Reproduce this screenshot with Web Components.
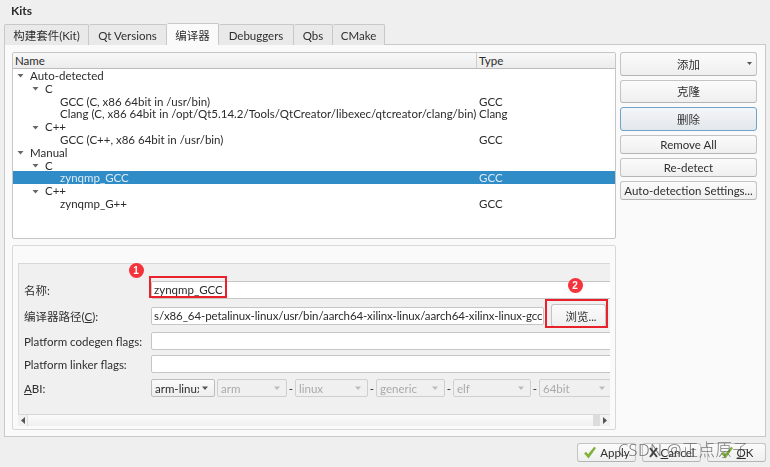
<!DOCTYPE html>
<html>
<head>
<meta charset="utf-8">
<style>
  html, body { margin: 0; height: 100%; }
  body { background: #efefef; overflow: hidden; }
</style>
</head>
<body>
<kits-dialog></kits-dialog>
<script>
const ui = `Lato, "Noto Sans CJK SC", sans-serif`;
const tick = `<svg width="14" height="13" viewBox="0 0 14 13"><path d="M1 7.500L3.200 5.800 5 8.200 11.200.8 13 2 5.600 12.500z" fill="#82b23c"/></svg>`;

class QtButton extends HTMLElement {
  connectedCallback() {
    const root = this.attachShadow({ mode: "open" });
    root.innerHTML = `
      <style>
        :host { display: flex; align-items: center; justify-content: center; box-sizing: border-box; position: relative;
          height: 23px; border: 1px solid #c4c4c4; border-bottom-color: #b4b4b4; border-radius: 3px;
          background: linear-gradient(#fbfbfb, #efefef); color: #2f2f2f; font: 11.5px ${ui}; white-space: nowrap; }
        :host([focused]) { border-color: #6fa3c9; background: linear-gradient(#f4f6f8, #e2e7ec); }
      </style><slot></slot>`;
  }
}
customElements.define("qt-button", QtButton);

class TreeRow extends HTMLElement {
  connectedCallback() {
    const depth = +this.getAttribute("depth") || 0;
    const arrow = this.hasAttribute("open");
    const root = this.attachShadow({ mode: "open" });
    root.innerHTML = `
      <style>
        :host { display: grid; grid-template-columns: 463px 1fr; height: 12.8px; line-height: 12.8px; font-size: 11.5px; color: #2b2b2b; white-space: nowrap; }
        :host([selected]) { background: #308cc6; color: #dcebf5; }
        .name { display: flex; align-items: center; padding: 1px 0 0 ${2 + depth * 15}px; }
        svg { width: 9px; height: 6px; margin: 0 5px 0 1px; flex: none; }
        .type { padding: 1px 0 0 3px; }
      </style>
      <div class="name">${arrow ? '<svg viewBox="0 0 9 6"><path d="M1.500 1h6L4.500 4.500z" fill="#666"/></svg>' : ''}<span><slot></slot></span></div>
      <div class="type">${this.getAttribute("type") || ""}</div>`;
  }
}
customElements.define("tree-row", TreeRow);

class QtField extends HTMLElement {
  connectedCallback() {
    const root = this.attachShadow({ mode: "open" });
    root.innerHTML = `
      <style>
        :host { display: block; box-sizing: border-box; height: 18px; line-height: 16px; background: #fff; border: 1px solid #c6c6c6; border-radius: 2px;
          padding: 0 2px; font-size: 11.5px; color: #2b2b2b; white-space: nowrap; overflow: hidden; flex: 1; min-width: 0; }
      </style><slot></slot>`;
  }
}
customElements.define("qt-field", QtField);

class QtCombo extends HTMLElement {
  connectedCallback() {
    const root = this.attachShadow({ mode: "open" });
    const w = this.getAttribute("w") || 66;
    root.innerHTML = `
      <style>
        :host { display: flex; align-items: center; box-sizing: border-box; width: ${w}px; height: 18px; flex: none; padding: 0 3px;
          border: 1px solid #cfcfcf; border-radius: 2px; background: #f0f0f0; color: #aaa; font-size: 11.5px; overflow: hidden; }
        :host([active]) { background: linear-gradient(#fafafa, #eeeeee); border-color: #bdbdbd; color: #2b2b2b; }
        span { flex: 1; overflow: hidden; white-space: nowrap; }
        svg { width: 8px; height: 5px; flex: none; margin: 0 2px 0 2px; }
      </style>
      <span><slot></slot></span>
      <svg viewBox="0 0 8 5"><path d="M1 .5h6L4 4z" fill="${this.hasAttribute("active") ? "#555" : "#bbb"}"/></svg>`;
  }
}
customElements.define("qt-combo", QtCombo);

class RedBadge extends HTMLElement {
  connectedCallback() {
    const root = this.attachShadow({ mode: "open" });
    root.innerHTML = `
      <style>
        :host { position: absolute; width: 15px; height: 15px; border-radius: 50%; background: #f5333a; color: #fff;
          font: bold 10px/15px "Liberation Sans", sans-serif; text-align: center; }
      </style><slot></slot>`;
  }
}
customElements.define("red-badge", RedBadge);

class KitsDialog extends HTMLElement {
  connectedCallback() {
    const root = this.attachShadow({ mode: "open" });
    root.innerHTML = `
      <style>
        :host { display: block; width: 770px; height: 467px; position: relative; overflow: hidden; font: 11.5px ${ui}; color: #2f2f2f; filter: blur(.3px); }
        .title { height: 24px; padding: 3px 0 0 11px; box-sizing: border-box; font-weight: 700; font-size: 12px; line-height: 15px; color: #2b2b2b; }
        .tabs { display: flex; height: 20px; padding-left: 4px; position: relative; z-index: 1; }
        .tab { box-sizing: border-box; height: 21px; padding-top: 3px; text-align: center; background: #e9e9e9; border: 1px solid #c8c8c8; border-bottom: 0; border-left: 0; border-radius: 2px 2px 0 0; line-height: 16px; color: #2f2f2f; }
        .tab:first-child { border-left: 1px solid #c8c8c8; }
        .tab.on { background: #fafafa; height: 22px; margin-top: -1px; padding-top: 4px; }
        .panel { box-sizing: border-box; margin: 0 4px; height: 393px; background: #fafafa; border: 1px solid #c8c8c8; padding: 7px 8px 0 7px; display: grid; grid-template-columns: 604px 137px; column-gap: 4px; grid-template-rows: 187px 1fr; row-gap: 6px; }
        .tree { background: #fff; border: 1px solid #c6c6c6; border-radius: 2px; overflow: hidden; }
        .head { display: grid; grid-template-columns: 463px 1fr; height: 15px; line-height: 15px; background: linear-gradient(#f8f8f8, #ececec); border-bottom: 1px solid #bcbcbc; color: #2b2b2b; }
        .head div { padding-left: 2px; }
        .head div + div { border-left: 1px solid #cfcfcf; }
        .side { display: flex; flex-direction: column; gap: 4px; }
        .side qt-button.tall { height: 23.6px; }
        .side qt-button.small { height: 19px; }
        .more { position: absolute; right: 4px; top: 9px; width: 5px; height: 3px; }
        .details { grid-column: 1; background: #fafafa; border: 1px solid #d8d8d8; border-radius: 2px; height: 185px; padding: 17px 5px 0 5px; box-sizing: border-box; }
        .form { background: #f0f0f0; border: 1px solid #d8d8d8; border-right: 0; height: 152px; box-sizing: border-box; padding: 17px 0 0 5px; display: flex; flex-direction: column; gap: 5px; overflow: hidden; }
        .row { display: flex; align-items: center; height: 18px; margin-right: -4px; }
        .row.tall { height: 23px; }
        .lbl { width: 127px; flex: none; white-space: nowrap; }
        .scroll { height: 11px; display: flex; background: linear-gradient(#fbfbfb, #f0f0f0); font-size: 0; }
        .cap { width: 10px; flex: none; display: flex; align-items: center; justify-content: center; border-right: 1px solid #ddd; background: #f1f1f1; box-sizing: border-box; }
        .cap.end { border-right: 0; }
        .bar { flex: 1; }
        .slot { width: 7px; background: #dcdcdc; }
        .abi { margin-top: 1px; }
        .dash { flex: none; width: 8px; text-align: center; }
        .foot { position: absolute; top: 443px; left: 577px; display: flex; gap: 6px; }
        .foot qt-button { height: 19px; width: 59px; gap: 3px; }
        .mark { position: absolute; border: 2px solid #e8212b; box-sizing: border-box; }
        .wm { position: absolute; left: 618px; top: 440px; font-size: 16.500px; line-height: 20px; letter-spacing: .3px; font-weight: 300; color: rgba(70,70,70,.7); white-space: nowrap; font-family: "Noto Sans", "Noto Sans CJK SC", sans-serif; }
      </style>
      <div class="title">Kits</div>
      <div class="tabs">
        <div class="tab" style="width:85px">构建套件(Kit)</div>
        <div class="tab" style="width:78px">Qt Versions</div>
        <div class="tab on" style="width:52px">编译器</div>
        <div class="tab" style="width:75px">Debuggers</div>
        <div class="tab" style="width:39px">Qbs</div>
        <div class="tab" style="width:52px">CMake</div>
      </div>
      <div class="panel">
        <div class="tree">
          <div class="head"><div>Name</div><div>Type</div></div>
          <div>
            <tree-row depth="0" open>Auto-detected</tree-row>
            <tree-row depth="1" open>C</tree-row>
            <tree-row depth="3" type="GCC">GCC (C, x86 64bit in /usr/bin)</tree-row>
            <tree-row depth="3" type="Clang">Clang (C, x86 64bit in /opt/Qt5.14.2/Tools/QtCreator/libexec/qtcreator/clang/bin)</tree-row>
            <tree-row depth="1" open>C++</tree-row>
            <tree-row depth="3" type="GCC">GCC (C++, x86 64bit in /usr/bin)</tree-row>
            <tree-row depth="0" open>Manual</tree-row>
            <tree-row depth="1" open>C</tree-row>
            <tree-row depth="3" type="GCC" selected>zynqmp_GCC</tree-row>
            <tree-row depth="1" open>C++</tree-row>
            <tree-row depth="3" type="GCC">zynqmp_G++</tree-row>
          </div>
        </div>
        <div class="side">
          <qt-button class="tall">添加<svg class="more" viewBox="0 0 5 3"><path d="M0 0h5L2.500 3z" fill="#555"/></svg></qt-button>
          <qt-button class="tall">克隆</qt-button>
          <qt-button class="tall" focused>删除</qt-button>
          <qt-button class="small">Remove All</qt-button>
          <qt-button class="small">Re-detect</qt-button>
          <qt-button class="small">Auto-detection Settings...</qt-button>
        </div>
        <div class="details">
          <div class="form">
            <div class="row"><div class="lbl">名称:</div><qt-field>zynqmp_GCC</qt-field></div>
            <div class="row tall"><div class="lbl">编译器路径(<u>C</u>):</div><qt-field style="margin-right:7px;letter-spacing:-.09px">s/x86_64-petalinux-linux/usr/bin/aarch64-xilinx-linux/aarch64-xilinx-linux-gcc</qt-field><qt-button style="width:55px;height:23px;flex:none;margin-right:8px;padding-left:5px;box-sizing:border-box">浏览...</qt-button></div>
            <div class="row"><div class="lbl">Platform codegen flags:</div><qt-field></qt-field></div>
            <div class="row"><div class="lbl">Platform linker flags:</div><qt-field></qt-field></div>
            <div class="row abi"><div class="lbl"><u>A</u>BI:</div>
              <qt-combo active w="64">arm-linux</qt-combo><qt-combo w="70" style="margin-left:2px">arm</qt-combo><span class="dash">-</span><qt-combo w="73">linux</qt-combo><span class="dash">-</span><qt-combo w="69">generic</qt-combo><span class="dash">-</span><qt-combo w="78">elf</qt-combo><span class="dash">-</span><qt-combo w="73">64bit</qt-combo>
            </div>
          </div>
          <div class="scroll">
            <div class="cap"><svg width="4" height="7" viewBox="0 0 4 7"><path d="M4 0v7L0 3.500z" fill="#555"/></svg></div>
            <div class="bar"></div>
            <div class="slot"></div>
            <div class="cap end"><svg width="4" height="7" viewBox="0 0 4 7"><path d="M0 0v7l4-3.500z" fill="#555"/></svg></div>
          </div>
        </div>
      </div>
      <div class="foot">
        <qt-button>${tick}Apply</qt-button>
        <qt-button><svg width="9" height="11" viewBox="0 0 9 11"><path d="M1 1l7 9M8 1L1 10" stroke="#444" stroke-width="2" fill="none"/></svg><span><u>C</u>ancel</span></qt-button>
        <qt-button>${tick}<span><u>O</u>K</span></qt-button>
      </div>
      <div class="mark" style="left:149px;top:276px;width:78px;height:22px"></div>
      <div class="mark" style="left:545px;top:299px;width:63px;height:29px"></div>
      <red-badge style="left:128.500px;top:263px">1</red-badge>
      <red-badge style="left:567.500px;top:277.500px">2</red-badge>
      <div class="wm">CSDN @正点原子</div>`;
  }
}
customElements.define("kits-dialog", KitsDialog);
</script>
</body>
</html>
